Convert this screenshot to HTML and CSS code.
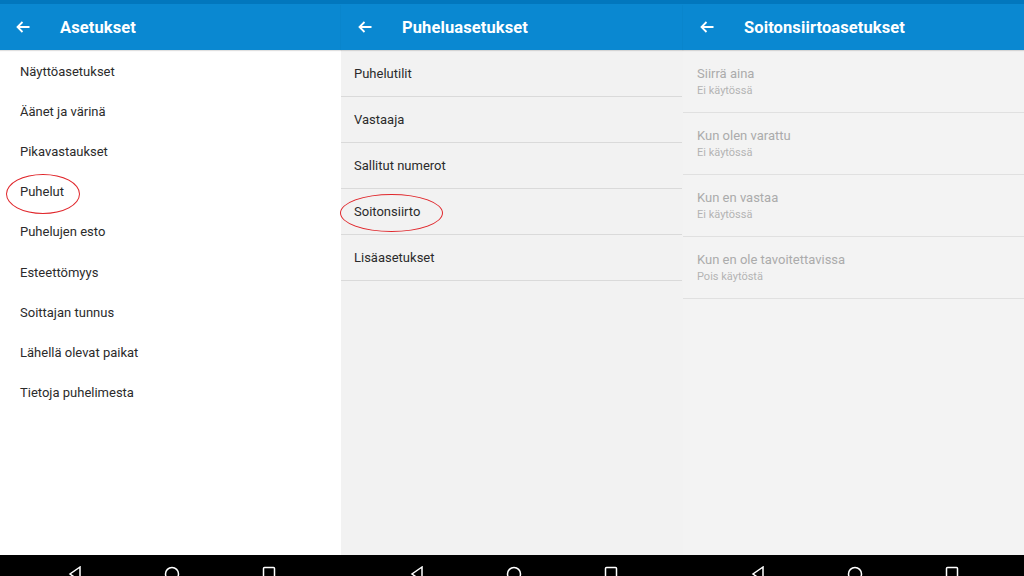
FILE: index.html
```html
<!DOCTYPE html>
<html lang="fi">
<head>
<meta charset="utf-8">
<title>Asetukset</title>
<link rel="stylesheet" href="styles.css">
</head>
<body>
<div class="screens">
  <section class="screen screen-white w1">
    <header class="appbar">
      <div class="status"></div>
      <div class="toolbar">
        <svg class="back" viewBox="0 0 14 12" width="14" height="12"><path d="M13.5 6H1.5M6.5 1L1.5 6l5 5" fill="none" stroke="#fff" stroke-width="1.8"/></svg>
        <h1 class="title">Asetukset</h1>
      </div>
    </header>
    <ul class="list list-plain">
      <li class="row">Näyttöasetukset</li>
      <li class="row">Äänet ja värinä</li>
      <li class="row">Pikavastaukset</li>
      <li class="row marked">Puhelut<span class="ring ring-a"></span></li>
      <li class="row">Puhelujen esto</li>
      <li class="row">Esteettömyys</li>
      <li class="row">Soittajan tunnus</li>
      <li class="row">Lähellä olevat paikat</li>
      <li class="row">Tietoja puhelimesta</li>
    </ul>
    <nav class="navbar">
      <svg viewBox="0 0 14 16" width="14" height="16"><path d="M12 1L2 8l10 7z" fill="none" stroke="#fff" stroke-width="1.5"/></svg>
      <svg viewBox="0 0 16 16" width="16" height="16"><circle cx="8" cy="8" r="6.5" fill="none" stroke="#fff" stroke-width="1.5"/></svg>
      <svg viewBox="0 0 14 14" width="14" height="14"><rect x="1.5" y="1.5" width="11" height="11" rx="1" fill="none" stroke="#fff" stroke-width="1.5"/></svg>
    </nav>
  </section>

  <section class="screen screen-grey w2">
    <header class="appbar">
      <div class="status"></div>
      <div class="toolbar">
        <svg class="back" viewBox="0 0 14 12" width="14" height="12"><path d="M13.5 6H1.5M6.5 1L1.5 6l5 5" fill="none" stroke="#fff" stroke-width="1.8"/></svg>
        <h1 class="title">Puheluasetukset</h1>
      </div>
    </header>
    <ul class="list list-divided">
      <li class="row">Puhelutilit</li>
      <li class="row">Vastaaja</li>
      <li class="row">Sallitut numerot</li>
      <li class="row marked">Soitonsiirto<span class="ring ring-b"></span></li>
      <li class="row">Lisäasetukset</li>
    </ul>
    <nav class="navbar">
      <svg viewBox="0 0 14 16" width="14" height="16"><path d="M12 1L2 8l10 7z" fill="none" stroke="#fff" stroke-width="1.5"/></svg>
      <svg viewBox="0 0 16 16" width="16" height="16"><circle cx="8" cy="8" r="6.5" fill="none" stroke="#fff" stroke-width="1.5"/></svg>
      <svg viewBox="0 0 14 14" width="14" height="14"><rect x="1.5" y="1.5" width="11" height="11" rx="1" fill="none" stroke="#fff" stroke-width="1.5"/></svg>
    </nav>
  </section>

  <section class="screen screen-grey2 w3">
    <header class="appbar">
      <div class="status"></div>
      <div class="toolbar">
        <svg class="back" viewBox="0 0 14 12" width="14" height="12"><path d="M13.5 6H1.5M6.5 1L1.5 6l5 5" fill="none" stroke="#fff" stroke-width="1.8"/></svg>
        <h1 class="title">Soitonsiirtoasetukset</h1>
      </div>
    </header>
    <ul class="list list-two">
      <li class="row2"><span class="t">Siirrä aina</span><span class="s">Ei käytössä</span></li>
      <li class="row2"><span class="t">Kun olen varattu</span><span class="s">Ei käytössä</span></li>
      <li class="row2"><span class="t">Kun en vastaa</span><span class="s">Ei käytössä</span></li>
      <li class="row2"><span class="t">Kun en ole tavoitettavissa</span><span class="s">Pois käytöstä</span></li>
    </ul>
    <nav class="navbar">
      <svg viewBox="0 0 14 16" width="14" height="16"><path d="M12 1L2 8l10 7z" fill="none" stroke="#fff" stroke-width="1.5"/></svg>
      <svg viewBox="0 0 16 16" width="16" height="16"><circle cx="8" cy="8" r="6.5" fill="none" stroke="#fff" stroke-width="1.5"/></svg>
      <svg viewBox="0 0 14 14" width="14" height="14"><rect x="1.5" y="1.5" width="11" height="11" rx="1" fill="none" stroke="#fff" stroke-width="1.5"/></svg>
    </nav>
  </section>
</div>
</body>
</html>
```

FILE: styles.css
```css
* { box-sizing: border-box; }
html, body { margin: 0; padding: 0; }
body {
  width: 1024px;
  height: 576px;
  overflow: hidden;
  font-family: Roboto, "Liberation Sans", Arial, sans-serif;
  background: #000;
}
.screens {
  display: flex;
  height: 576px;
}
.screen {
  display: flex;
  flex-direction: column;
  height: 576px;
}
.w1 { width: 341px; }
.w2 { width: 342px; }
.w3 { width: 341px; }
.screen-white { background: #fff; }
.screen-grey { background: #f2f2f2; }
.screen-grey2 { background: #f3f3f3; }

.appbar { flex: none; }
.status { height: 4px; background: #0277bd; }
.toolbar {
  height: 46px;
  background: #0a88d1;
  display: flex;
  align-items: center;
  padding-left: 16px;
  box-shadow: 0 1px 1px rgba(0,0,0,0.12);
  position: relative;
  z-index: 1;
}
.w2 .toolbar, .w3 .toolbar { padding-left: 17px; }
.back { display: block; }
.title {
  margin: 0 0 0 30px;
  font-size: 16.5px;
  font-weight: 700;
  color: #fff;
  letter-spacing: 0.1px;
}

.list {
  list-style: none;
  margin: 0;
  padding: 0;
  flex: 1;
}
.list-plain { padding-top: 1px; }
.list-plain .row {
  height: 40.2px;
  display: flex;
  align-items: center;
  padding-left: 20px;
  font-size: 13px;
  color: #2b2b2b;
}
.list-divided { padding-top: 1px; }
.list-divided .row {
  height: 46px;
  display: flex;
  align-items: center;
  padding-left: 13px;
  font-size: 13px;
  color: #2b2b2b;
  border-bottom: 1px solid #dadada;
  margin-right: 1px;
}
.list-two { padding-top: 1px; }
.row2 {
  height: 62px;
  display: flex;
  flex-direction: column;
  padding: 15px 0 0 14px;
  border-bottom: 1.5px solid #e0e0e0;
}
.row2 .t { font-size: 13px; color: #ababab; line-height: 16px; }
.row2 .s { font-size: 11px; color: #b3b3b3; line-height: 14px; margin-top: 2px; }

.marked { position: relative; }
.ring {
  position: absolute;
  border: 1.6px solid #e0262b;
  border-radius: 50%;
}
.ring-a { left: 6px; top: 2px; width: 74px; height: 40px; }
.ring-b { left: -1px; top: 5px; width: 103px; height: 38px; }

.navbar {
  flex: none;
  height: 21px;
  background: #000;
  display: flex;
  justify-content: center;
  gap: 82px;
  padding-top: 11px;
  padding-left: 3px;
  overflow: hidden;
}
.navbar svg { display: block; flex: none; }
```
